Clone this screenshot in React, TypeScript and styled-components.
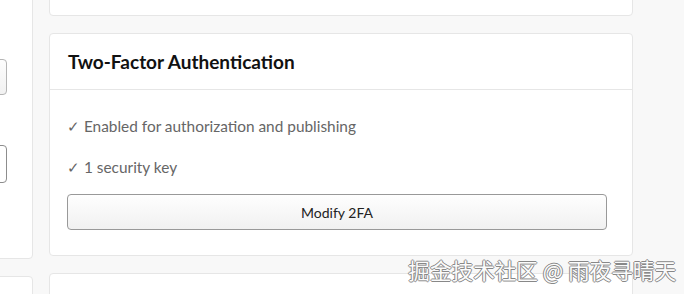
import React from "react";
import styled, { createGlobalStyle } from "styled-components";

const Global = createGlobalStyle`
  html, body { margin: 0; padding: 0; background: #f8f8f8; overflow: hidden; }
  body { font-family: Lato, "Noto Sans", sans-serif; }
  * { box-sizing: border-box; }
`;

const Viewport = styled.div`
  position: relative;
  width: 684px;
  height: 294px;
  overflow: hidden;
`;

const Layout = styled.div`
  display: grid;
  grid-template-columns: 200px 584px;
  column-gap: 16px;
  margin-left: -167px;
  align-items: start;
`;

const Column = styled.div<{ $offset: number }>`
  display: flex;
  flex-direction: column;
  gap: 17px;
  margin-top: ${(p) => p.$offset}px;
`;

const Card = styled.section<{ $h?: number }>`
  background: #fff;
  border: 1px solid #e6e6e6;
  border-radius: 4px;
  ${(p) => (p.$h ? `height: ${p.$h}px;` : "")}
`;

const SideCard = styled(Card)`
  display: flex;
  flex-direction: column;
  padding: 0 25px 0 20px;
`;

const SideField = styled.div<{ $filled?: boolean; $top: number; $h: number }>`
  margin-top: ${(p) => p.$top}px;
  height: ${(p) => p.$h}px;
  border: 1px solid ${(p) => (p.$filled ? "#b5b5b5" : "#8d8d8d")};
  border-radius: 4px;
  background: ${(p) => (p.$filled ? "linear-gradient(#fdfdfd, #f1f1f1)" : "#fff")};
`;

const Header = styled.header`
  height: 56px;
  display: flex;
  align-items: center;
  padding: 0 18px;
  border-bottom: 1px solid #e6e6e6;
`;

const Title = styled.h2`
  margin: 0;
  font-size: 19px;
  font-weight: 700;
  color: #111;
`;

const Body = styled.div`
  display: flex;
  flex-direction: column;
  padding: 25px 25px 25px 17px;
`;

const Line = styled.p`
  margin: 0 0 19px;
  font-size: 15.4px;
  line-height: 22px;
  color: #666;
  &:last-of-type { margin-bottom: 16px; }
`;

const Button = styled.button`
  height: 36px;
  border: 1px solid #999;
  border-radius: 4px;
  background: linear-gradient(#fefefe, #f1f1f1);
  font-family: inherit;
  font-size: 14px;
  color: #222;
`;

const Watermark = styled.div`
  position: absolute;
  right: 8px;
  bottom: 12px;
  font-family: "Noto Sans CJK SC", sans-serif;
  font-size: 21.6px;
  line-height: 24px;
  color: #fbfbfb;
  text-shadow: 1px 0 0 #888, -1px 0 0 #888, 0 1px 0 #888, 0 -1px 0 #888;
  white-space: nowrap;
`;

export default function App() {
  return (
    <>
      <Global />
      <Viewport>
        <Layout>
          <Column $offset={-60}>
            <SideCard $h={319}>
              <SideField $filled $top={118} $h={36} />
              <SideField $top={50} $h={38} />
            </SideCard>
            <Card $h={60} />
          </Column>
          <Column $offset={-41}>
            <Card $h={57} />
            <Card>
              <Header>
                <Title>Two-Factor Authentication</Title>
              </Header>
              <Body>
                <Line>✓ Enabled for authorization and publishing</Line>
                <Line>✓ 1 security key</Line>
                <Button>Modify 2FA</Button>
              </Body>
            </Card>
            <Card $h={60} />
          </Column>
        </Layout>
        <Watermark>掘金技术社区 @ 雨夜寻晴天</Watermark>
      </Viewport>
    </>
  );
}
